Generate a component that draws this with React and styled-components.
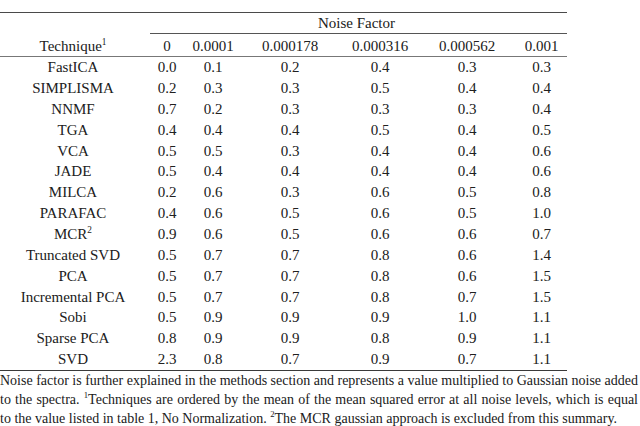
import React from 'react';
import styled, { createGlobalStyle } from 'styled-components';

const GlobalStyle = createGlobalStyle`
  html, body {
    margin: 0;
    padding: 0;
    background: #ffffff;
  }
  body {
    font-family: "Liberation Serif", "Times New Roman", serif;
    color: #202020;
  }
`;

const columns = ['0', '0.0001', '0.000178', '0.000316', '0.000562', '0.001'];

const rows = [
    { name: 'FastICA', values: ['0.0', '0.1', '0.2', '0.4', '0.3', '0.3'] },
    { name: 'SIMPLISMA', values: ['0.2', '0.3', '0.3', '0.5', '0.4', '0.4'] },
    { name: 'NNMF', values: ['0.7', '0.2', '0.3', '0.3', '0.3', '0.4'] },
    { name: 'TGA', values: ['0.4', '0.4', '0.4', '0.5', '0.4', '0.5'] },
    { name: 'VCA', values: ['0.5', '0.5', '0.3', '0.4', '0.4', '0.6'] },
    { name: 'JADE', values: ['0.5', '0.4', '0.4', '0.4', '0.4', '0.6'] },
    { name: 'MILCA', values: ['0.2', '0.6', '0.3', '0.6', '0.5', '0.8'] },
    { name: 'PARAFAC', values: ['0.4', '0.6', '0.5', '0.6', '0.5', '1.0'] },
    { name: 'MCR', sup: '2', values: ['0.9', '0.6', '0.5', '0.6', '0.6', '0.7'] },
    { name: 'Truncated SVD', values: ['0.5', '0.7', '0.7', '0.8', '0.6', '1.4'] },
    { name: 'PCA', values: ['0.5', '0.7', '0.7', '0.8', '0.6', '1.5'] },
    { name: 'Incremental PCA', values: ['0.5', '0.7', '0.7', '0.8', '0.7', '1.5'] },
    { name: 'Sobi', values: ['0.5', '0.9', '0.9', '0.9', '1.0', '1.1'] },
    { name: 'Sparse PCA', values: ['0.8', '0.9', '0.9', '0.8', '0.9', '1.1'] },
    { name: 'SVD', values: ['2.3', '0.8', '0.7', '0.9', '0.7', '1.1'] },
];

const Page = styled.div`
    width: 640px;
    height: 426px;
    overflow: hidden;
    padding-top: 12px;
    box-sizing: border-box;
`;

const Table = styled.div`
    width: 567px;
    display: grid;
    grid-template-columns: 146px 42px 50px 104px 76px 98px 51px;
    font-size: 15px;
    border-top: 1.3px solid #4a4a4a;
    border-bottom: 1.3px solid #3a3a3a;
`;

const Cell = styled.div`
    height: ${p => p.$h || 20.86}px;
    display: flex;
    align-items: center;
    justify-content: center;
    white-space: nowrap;
`;

const HeadCell = styled(Cell)`
    height: 23px;
    align-items: flex-end;
    padding-bottom: 1px;
    box-sizing: border-box;
    line-height: 17px;
    border-bottom: 1px solid #777;
`;

const SpanHeader = styled(Cell)`
    grid-column: 2 / span 6;
    position: relative;
    height: 21px;
    &::after {
        content: '';
        position: absolute;
        left: 4px;
        right: 0;
        bottom: 0;
        border-bottom: 1px solid #555;
    }
`;

const Label = styled.span`
    display: inline-block;
`;

const Sup = styled.sup`
    font-size: 0.62em;
    line-height: 0;
    vertical-align: super;
`;

const Notes = styled.div`
    width: 638px;
    font-size: 14px;
    line-height: 19px;
`;

const NoteLine = styled.div`
    text-align: ${p => (p.$last ? 'left' : 'justify')};
    text-align-last: ${p => (p.$last ? 'left' : 'justify')};
`;

export default function App() {
    return (
        <>
            <GlobalStyle />
            <Page>
                <Table>
                    <Cell $h={21} />
                    <SpanHeader>Noise Factor</SpanHeader>
                    <HeadCell><Label>Technique<Sup>1</Sup></Label></HeadCell>
                    {columns.map(c => (
                        <HeadCell key={c}>{c}</HeadCell>
                    ))}
                    {rows.map((r, i) => (
                        <React.Fragment key={r.name}>
                            <Cell $h={i === 0 ? 21 : 20.86}>
                                <Label>{r.name}{r.sup && <Sup>{r.sup}</Sup>}</Label>
                            </Cell>
                            {r.values.map((v, j) => (
                                <Cell key={j} $h={i === 0 ? 21 : 20.86}>{v}</Cell>
                            ))}
                        </React.Fragment>
                    ))}
                </Table>
                <Notes>
                    <NoteLine>Noise factor is further explained in the methods section and represents a value multiplied to Gaussian noise added</NoteLine>
                    <NoteLine>to the spectra. <Sup>1</Sup>Techniques are ordered by the mean of the mean squared error at all noise levels, which is equal</NoteLine>
                    <NoteLine $last>to the value listed in table 1, No Normalization. <Sup>2</Sup>The MCR gaussian approach is excluded from this summary.</NoteLine>
                </Notes>
            </Page>
        </>
    );
}
